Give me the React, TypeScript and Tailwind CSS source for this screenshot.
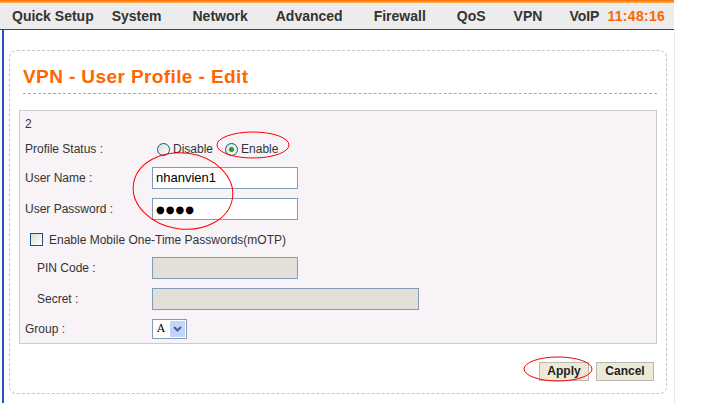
import React from "react";

const navItems = [
  { label: "Quick Setup", ml: "ml-[12px]" },
  { label: "System", ml: "ml-[18px]" },
  { label: "Network", ml: "ml-[31px]" },
  { label: "Advanced", ml: "ml-[28px]" },
  { label: "Firewall", ml: "ml-[31px]" },
  { label: "QoS", ml: "ml-[31px]" },
  { label: "VPN", ml: "ml-[28px]" },
  { label: "VoIP", ml: "ml-[27px]" },
];

const Radio: React.FC<{ checked?: boolean }> = ({ checked }) => (
  <span className="w-[13px] h-[13px] rounded-full border border-[#1c5180] bg-gradient-to-br from-[#dcdcd7] to-[#ffffff] flex items-center justify-center">
    {checked && <span className="w-[5px] h-[5px] rounded-full bg-[#21a121]" />}
  </span>
);

const Row: React.FC<{ label: string; h: string; indent?: boolean; children?: React.ReactNode }> = ({
  label,
  h,
  indent,
  children,
}) => (
  <div className={`flex items-center ${h}`}>
    <div className={`w-[127px] shrink-0 ${indent ? "pl-[12px]" : ""}`}>{label}</div>
    {children}
  </div>
);

const App: React.FC = () => {
  return (
    <div className="relative w-[707px] h-[403px] overflow-hidden bg-white font-['Liberation_Sans',Arial,sans-serif] text-[#333]">
      {/* top bar */}
      <div className="w-[674px] h-[3px] bg-gradient-to-b from-[#ff6a00] to-[#ffb347]" />
      <div className="w-[674px] h-[27px] pt-[1px] bg-[#ececec] border-b border-[#444] flex items-center text-[14px] font-bold text-[#333]">
        {navItems.map((n) => (
          <span key={n.label} className={n.ml}>
            {n.label}
          </span>
        ))}
        <span className="ml-[8px] text-[#ff6600] tracking-[0.3px]">11:48:16</span>
      </div>

      <div className="flex h-[373px] w-[675px] border-r border-dotted border-[#d9d2d9]">
        <div className="ml-[2px] w-[2px] bg-[#2152c4]" />
        <div className="ml-[5px] mt-[20px] w-[658px] h-[344px] rounded-[8px] border border-dashed border-[#c4c4c4] px-[9px] pt-[15px]">
          <div className="ml-[4px] pb-[5px] border-b border-dashed border-[#ff9a00]">
            <h1 className="text-[19px] leading-[22px] font-bold text-[#ff6600] tracking-[0.4px]">
              VPN - User Profile - Edit
            </h1>
          </div>

          <div className="mt-[16px] border border-[#cccccc] bg-[#f7f3f6] pl-[5px] pb-[1px] text-[12px]">
            <div className="flex items-center h-[25px]">2</div>
            <Row label="Profile Status :" h="h-[26px]">
              <div className="flex items-center ml-[5px]">
                <Radio />
                <span className="ml-[3px]">Disable</span>
                <span className="ml-[12px]" />
                <Radio checked />
                <span className="ml-[3px]">Enable</span>
              </div>
            </Row>
            <Row label="User Name :" h="h-[31px]">
              <div className="w-[146px] h-[22px] border border-[#7f9db9] bg-white flex items-center pl-[3px] text-[13px] text-black">
                nhanvien1
              </div>
            </Row>
            <Row label="User Password :" h="h-[32px]">
              <div className="w-[146px] h-[22px] border border-[#7f9db9] bg-white flex items-center pl-[3px] text-black">
                <span className="font-['DejaVu_Sans'] text-[10px] tracking-[1px]">●●●●</span>
              </div>
            </Row>
            <div className="flex items-center h-[29px] pl-[5px]">
              <span className="w-[13px] h-[13px] border border-[#1c5180] bg-gradient-to-br from-[#dcdcd7] to-white" />
              <span className="ml-[6px]">Enable Mobile One-Time Passwords(mOTP)</span>
            </div>
            <Row label="PIN Code :" h="h-[28px]" indent>
              <div className="w-[146px] h-[22px] border border-[#7f9db9] bg-[#e2e0d8]" />
            </Row>
            <Row label="Secret :" h="h-[34px]" indent>
              <div className="w-[267px] h-[22px] border border-[#7f9db9] bg-[#e2e0d8]" />
            </Row>
            <Row label="Group :" h="h-[26px]">
              <div className="w-[35px] h-[20px] border border-[#7f9db9] bg-white flex items-center justify-between pl-[4px] pr-[1px]">
                <span className="font-['DejaVu_Serif'] text-[11px] text-black">A</span>
                <span className="w-[15px] h-[16px] bg-[#c3d4fc] flex items-center justify-center">
                  <svg width="9" height="6" viewBox="0 0 9 6">
                    <path d="M1 1 L4.5 4.5 L8 1" stroke="#4d6185" strokeWidth="2" fill="none" />
                  </svg>
                </span>
              </div>
            </Row>
          </div>

          <div className="mt-[18px] flex justify-end gap-[7px] pr-[3px] text-[12px] font-bold text-[#222]">
            <button className="w-[50px] h-[19px] bg-[#ecead6] border border-[#b8b8b0] leading-[17px]">Apply</button>
            <button className="w-[58px] h-[19px] bg-[#ecead6] border border-[#b8b8b0] leading-[17px]">Cancel</button>
          </div>
        </div>
      </div>

      {/* red annotation ellipses */}
      <svg className="absolute inset-0 pointer-events-none" width="707" height="403">
        <ellipse cx="253" cy="145" rx="36" ry="13" fill="none" stroke="#ff0000" strokeWidth="1" />
        <ellipse cx="183" cy="191" rx="50" ry="38" fill="none" stroke="#ff0000" strokeWidth="1" transform="rotate(8 183 191)" />
        <ellipse cx="558" cy="369" rx="34" ry="12" fill="none" stroke="#ff0000" strokeWidth="1" />
      </svg>
    </div>
  );
};

export default App;
